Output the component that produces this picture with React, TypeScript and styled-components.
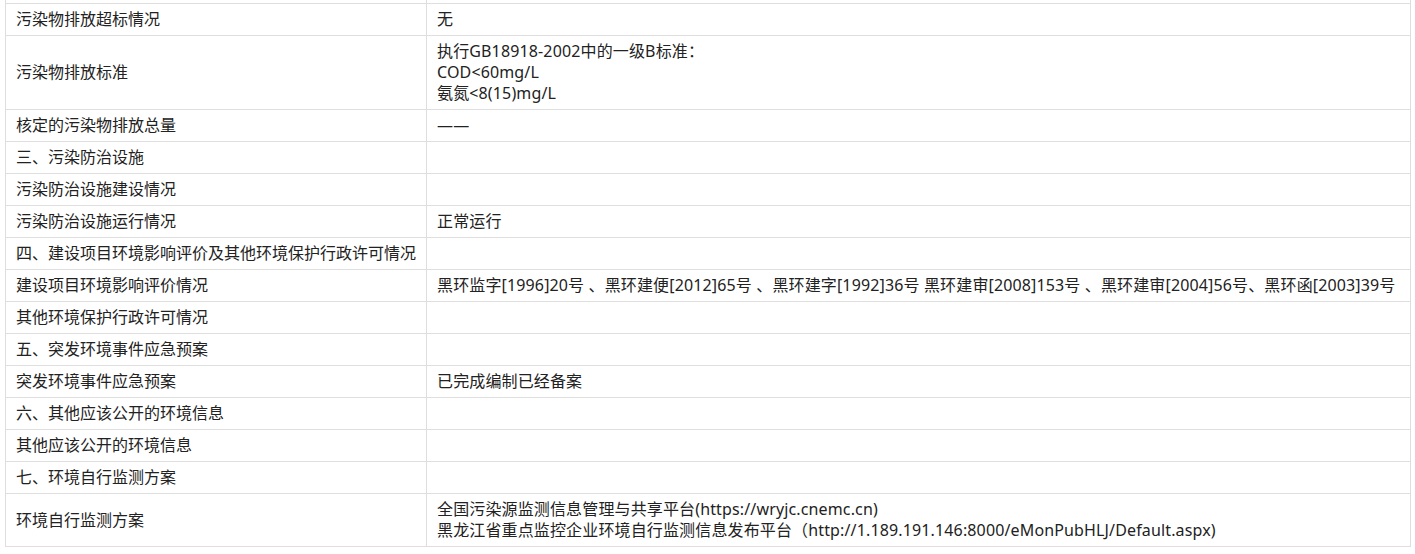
import React from 'react';
import styled, { createGlobalStyle } from 'styled-components';

interface InfoRow {
  label: string;
  value?: string[];
}

const rows: InfoRow[] = [
  { label: '污染物排放超标情况', value: ['无'] },
  {
    label: '污染物排放标准',
    value: ['执行GB18918-2002中的一级B标准：', 'COD<60mg/L', '氨氮<8(15)mg/L'],
  },
  { label: '核定的污染物排放总量', value: ['——'] },
  { label: '三、污染防治设施' },
  { label: '污染防治设施建设情况' },
  { label: '污染防治设施运行情况', value: ['正常运行'] },
  { label: '四、建设项目环境影响评价及其他环境保护行政许可情况' },
  {
    label: '建设项目环境影响评价情况',
    value: [
      '黑环监字[1996]20号 、黑环建便[2012]65号 、黑环建字[1992]36号 黑环建审[2008]153号 、黑环建审[2004]56号、黑环函[2003]39号',
    ],
  },
  { label: '其他环境保护行政许可情况' },
  { label: '五、突发环境事件应急预案' },
  { label: '突发环境事件应急预案', value: ['已完成编制已经备案'] },
  { label: '六、其他应该公开的环境信息' },
  { label: '其他应该公开的环境信息' },
  { label: '七、环境自行监测方案' },
  {
    label: '环境自行监测方案',
    value: [
      '全国污染源监测信息管理与共享平台(https://wryjc.cnemc.cn)',
      '黑龙江省重点监控企业环境自行监测信息发布平台（http://1.189.191.146:8000/eMonPubHLJ/Default.aspx)',
    ],
  },
];

const GlobalStyle = createGlobalStyle`
  html, body {
    margin: 0;
    padding: 0;
    background: #fff;
  }
  body {
    font-family: 'Noto Sans', 'Noto Sans CJK SC', sans-serif;
    color: #222;
  }
`;

const Page = styled.div`
  padding: 0 4px 0 5px;
`;

const Table = styled.table`
  width: 1406px;
  border-collapse: collapse;
  table-layout: fixed;
  font-size: 16px;
  line-height: 21px;
`;

const Cell = styled.td<{ $strip?: boolean }>`
  border: 1px solid #dedede;
  border-top: ${p => (p.$strip ? 'none' : '1px solid #dedede')};
  padding: ${p => (p.$strip ? '0 10px' : '5px 10px')};
  height: ${p => (p.$strip ? '3px' : 'auto')};
  vertical-align: middle;
  text-align: left;
  white-space: nowrap;
  color: #222;
`;

const LabelCell = styled(Cell)``;

const Line = styled.div`
  display: block;
  letter-spacing: 0.14px;
`;

export default function App() {
  return (
    <>
      <GlobalStyle />
      <Page>
        <Table>
          <colgroup>
            <col style={{ width: 421 }} />
            <col />
          </colgroup>
          <tbody>
            <tr>
              <LabelCell $strip />
              <Cell $strip />
            </tr>
            {rows.map(row => (
              <tr key={row.label}>
                <LabelCell>{row.label}</LabelCell>
                <Cell>
                  {(row.value ?? []).map(line => (
                    <Line key={line}>{line}</Line>
                  ))}
                </Cell>
              </tr>
            ))}
          </tbody>
        </Table>
      </Page>
    </>
  );
}
